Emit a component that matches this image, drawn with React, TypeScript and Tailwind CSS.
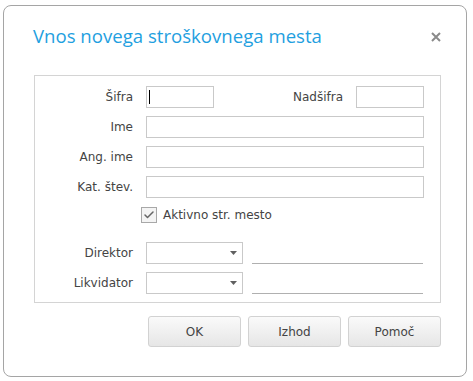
import { Check } from "lucide-react";

const label = "text-[12px] text-[#444] text-right w-[98px] shrink-0";
const box = "h-[22px] border border-[#c9c9c9] bg-white";

function Field({ name, children }: { name: string; children: React.ReactNode }) {
  return (
    <div className="flex items-center gap-[13px] h-[22px]">
      <span className={label}>{name}</span>
      {children}
    </div>
  );
}

function Select() {
  return (
    <div className={`${box} w-[97px] flex items-center justify-end pr-[5px]`}>
      <svg width="7" height="4" viewBox="0 0 7 4">
        <path d="M0 0 L7 0 L3.5 4 Z" fill="#606060" />
      </svg>
    </div>
  );
}

function Btn({ text }: { text: string }) {
  return (
    <button className="w-[93px] h-[31px] rounded-[3px] border border-[#d2d2d2] bg-gradient-to-b from-[#fafafa] to-[#e6e6e6] text-[12px] text-[#444]">
      {text}
    </button>
  );
}

export default function App() {
  return (
    <div
      className="w-[473px] h-[381px] bg-white pt-[5px] pl-[3px]"
      style={{ fontFamily: '"DejaVu Sans", Verdana, sans-serif' }}
    >
      <div className="w-[464px] h-[372px] border border-[#a5a5a5] rounded-[8px] flex flex-col">
        {/* Header */}
        <div className="flex justify-between pl-[29px] pr-[25px] pt-[18px] h-[69px] items-start">
          <h1
            className="text-[18.6px] leading-[24px] text-[#1fa0e0]"
            style={{ fontFamily: '"Open Sans", sans-serif' }}
          >
            Vnos novega stroškovnega mesta
          </h1>
          <svg width="10" height="10" viewBox="0 0 10 10" className="mt-[8px]">
            <path d="M1 1 L9 9 M9 1 L1 9" stroke="#8a8a8a" strokeWidth="2" />
          </svg>
        </div>

        {/* Panel */}
        <div className="ml-[30px] w-[407px] h-[228px] border border-[#d4d4d4] pt-[10px] flex flex-col">
          <div className="flex flex-col gap-[8px]">
            <div className="flex items-center h-[22px]">
              <Field name="Šifra">
                <div className={`${box} w-[68px] flex items-center pl-[2px]`}>
                  <div className="w-px h-[14px] bg-black" />
                </div>
              </Field>
              <span className="text-[12px] text-[#444] ml-[65px] w-[64px] text-right">Nadšifra</span>
              <div className={`${box} w-[68px] ml-[13px]`} />
            </div>
            <Field name="Ime">
              <div className={`${box} w-[278px]`} />
            </Field>
            <Field name="Ang. ime">
              <div className={`${box} w-[278px]`} />
            </Field>
            <Field name="Kat. štev.">
              <div className={`${box} w-[278px]`} />
            </Field>
          </div>

          <div className="flex items-center mt-[9px] ml-[106px] gap-[6px] h-[16px]">
            <div className="w-[16px] h-[16px] border border-[#a8a8a8] bg-[#f4f4f4] flex items-center justify-center">
              <Check className="w-[12px] h-[12px] text-[#666]" strokeWidth={3} />
            </div>
            <span className="text-[12px] text-[#444]">Aktivno str. mesto</span>
          </div>

          <div className="flex flex-col gap-[8px] mt-[19px]">
            <Field name="Direktor">
              <Select />
              <div className="w-[171px] h-[22px] border-b border-[#b0b0b0] ml-[-4px]" />
            </Field>
            <Field name="Likvidator">
              <Select />
              <div className="w-[171px] h-[22px] border-b border-[#b0b0b0] ml-[-4px]" />
            </Field>
          </div>
        </div>

        {/* Buttons */}
        <div className="flex justify-end gap-[7px] mt-[13px] pr-[25px]">
          <Btn text="OK" />
          <Btn text="Izhod" />
          <Btn text="Pomoč" />
        </div>
      </div>
    </div>
  );
}
